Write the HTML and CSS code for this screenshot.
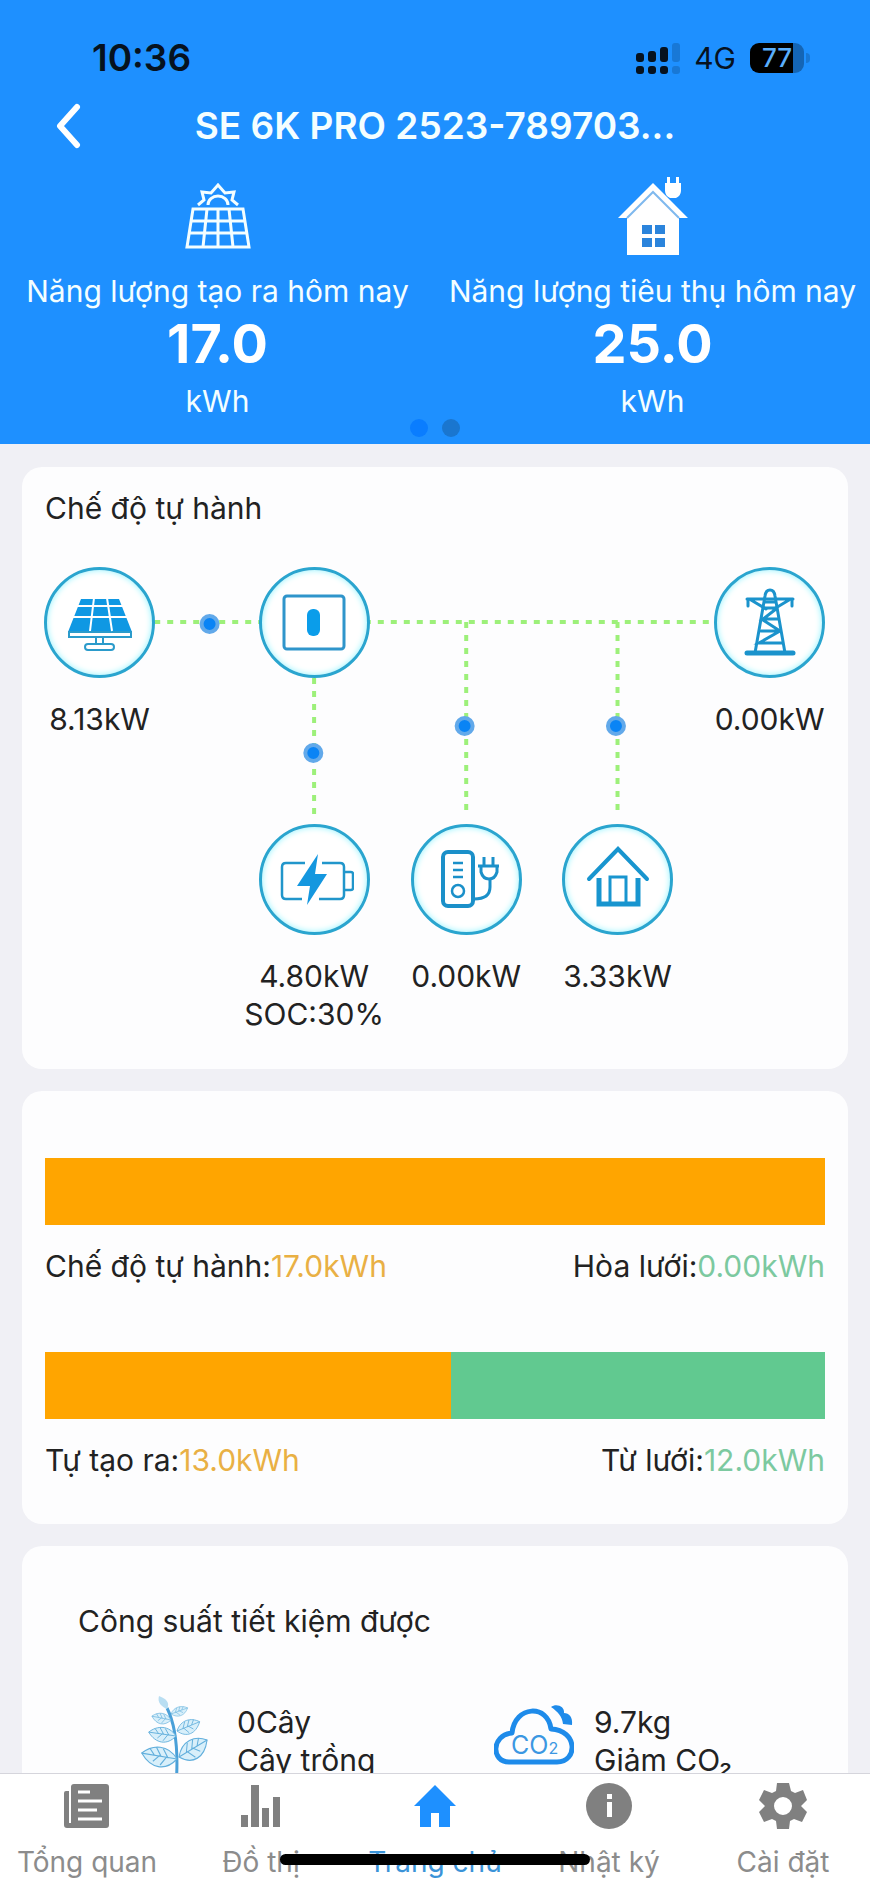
FILE: index.html
```html
<!DOCTYPE html>
<html lang="vi">
<head>
  <meta charset="UTF-8">
  <meta name="viewport" content="width=device-width, initial-scale=1.0">
  <title>SE 6K PRO</title>
  <link rel="stylesheet" href="styles.css">
</head>
<body>
  <header class="header">
    <div class="status">
      <span class="time">10:36</span>
      <svg class="signal" width="46" height="32" viewBox="0 0 46 32">
        <g fill="#06121f">
          <rect x="0" y="11" width="8" height="9" rx="3"/>
          <rect x="12" y="9" width="8" height="11" rx="3"/>
          <rect x="24" y="5" width="8" height="15" rx="3"/>
          <rect x="0" y="24" width="8" height="8" rx="3"/>
          <rect x="12" y="24" width="8" height="8" rx="3"/>
          <rect x="24" y="24" width="8" height="8" rx="3"/>
        </g>
        <g fill="#1878d6">
          <rect x="36" y="1" width="8" height="19" rx="3"/>
          <rect x="36" y="24" width="8" height="8" rx="3"/>
        </g>
      </svg>
      <span class="network">4G</span>
      <span class="battery">77</span>
    </div>
    <div class="navbar">
      <button class="back" aria-label="Quay lại">
        <svg width="28" height="46" viewBox="0 0 28 46"><path d="M23 4 6 23l17 19" fill="none" stroke="#fff" stroke-width="6" stroke-linecap="round" stroke-linejoin="round"/></svg>
      </button>
      <h1>SE 6K PRO 2523-789703...</h1>
    </div>
    <div class="summary">
      <div class="stat">
        <svg width="80" height="80" viewBox="0 0 80 80" fill="none" stroke="#f4feff" stroke-width="3">
          <path d="M15 33h50l6 38H9zM12 45h56M11 57h58M29 33l-4 38M40 33v38M51 33l4 38"/>
          <path d="M20 29l6-5-2-8 9 1 7-8 7 8 9-1-2 8 6 5"/>
          <path d="M30 29a10 9 0 0 1 20 0"/>
        </svg>
        <p class="stat-label">Năng lượng tạo ra hôm nay</p>
        <p class="stat-value">17.0</p>
        <p class="stat-unit">kWh</p>
      </div>
      <div class="stat">
        <svg width="80" height="80" viewBox="0 0 80 80">
          <path d="M40 12 66 38v41H14V38z" fill="#fff"/>
          <path d="M40 7 5 42h9l26-26 26 26h9L61 28z" fill="#fff"/>
          <path d="M14 42l26-26 26 26" fill="none" stroke="#7fb9ee" stroke-width="2"/>
          <path d="M52 7h16v8a8 8 0 0 1-5 7h-6a8 8 0 0 1-5-7zM54 1h3v7h-3zM63 1h3v7h-3z" fill="#fff"/>
          <path d="M29 49h10v9H29zM42 49h10v9H42zM29 62h10v9H29zM42 62h10v9H42z" fill="#2b84dc"/>
        </svg>
        <p class="stat-label">Năng lượng tiêu thụ hôm nay</p>
        <p class="stat-value">25.0</p>
        <p class="stat-unit">kWh</p>
      </div>
    </div>
    <div class="pager">
      <span class="pager-dot active"></span>
      <span class="pager-dot"></span>
    </div>
  </header>

  <main class="content">
    <section class="card flow-card">
      <h2>Chế độ tự hành</h2>
      <div class="flow">
        <svg class="flow-lines" width="100%" height="257">
          <g stroke="#9df07a" stroke-width="4" stroke-dasharray="6 7">
            <line x1="14%" y1="55" x2="28%" y2="55"/>
            <line x1="41%" y1="55" x2="86%" y2="55"/>
            <line x1="34.5%" y1="111" x2="34.5%" y2="250"/>
            <line x1="54%" y1="55" x2="54%" y2="250"/>
            <line x1="73.4%" y1="55" x2="73.4%" y2="250"/>
          </g>
          <g fill="#0a84f5" stroke="#62a9ea" stroke-width="4">
            <circle cx="21.1%" cy="57" r="8"/>
            <circle cx="34.4%" cy="186" r="8"/>
            <circle cx="53.8%" cy="159" r="8"/>
            <circle cx="73.2%" cy="159" r="8"/>
          </g>
        </svg>

        <div class="node node-pv">
          <div class="circle">
            <svg width="80" height="80" viewBox="0 0 80 80">
              <path d="M21 16h38l13 33H8z" fill="#0f98e3"/>
              <path d="M9 49h62v5H9zM36 55v6M43 55v6" fill="#fff" stroke="#2b9bcb" stroke-width="2"/>
              <rect x="25" y="61" width="29" height="6" rx="3" fill="#fff" stroke="#2b9bcb" stroke-width="2"/>
              <path d="M17 23h48M13 34h56M34 15l-4 33M47 15l5 33" stroke="#fff" stroke-width="2" fill="none"/>
            </svg>
          </div>
          <span>8.13kW</span>
        </div>
        <div class="node node-inverter">
          <div class="circle">
            <svg width="80" height="80" viewBox="0 0 80 80">
              <rect x="10" y="13" width="60" height="53" rx="3" fill="none" stroke="#2f95cb" stroke-width="3"/>
              <rect x="33" y="26" width="13" height="27" rx="6" fill="#0a9dea"/>
            </svg>
          </div>
        </div>
        <div class="node node-grid">
          <div class="circle">
            <svg width="80" height="80" viewBox="0 0 80 80" fill="none" stroke="#1b93cc" stroke-width="3" stroke-linecap="round">
              <path d="M25 70l10-57c1-8 9-8 10 0l10 57"/>
              <path d="M17 16h46M18 16v7M62 16v7M21 17l15 9M59 17l-15 9" />
              <path d="M35 19h10M34 25h12M46 26 33 36h15M33 37l17 11M31 48h19M50 48 29 60h23" stroke-width="3"/>
              <path d="M17 70h46" stroke-width="5"/>
            </svg>
          </div>
          <span>0.00kW</span>
        </div>
        <div class="node node-battery">
          <div class="circle">
            <svg width="80" height="80" viewBox="0 0 80 80">
              <path d="M31 23H12q-4 0-4 4v28q0 4 4 4h16M48 23h18q4 0 4 4v28q0 4-4 4H45M70 32h7q2 0 2 2v14q0 2-2 2h-7" fill="none" stroke="#2196cb" stroke-width="2.5"/>
              <path d="M44 14 23 46h13l-3 19 20-31H41z" fill="#1497df"/>
            </svg>
          </div>
          <span>4.80kW</span>
          <span>SOC:30%</span>
        </div>
        <div class="node node-charger">
          <div class="circle">
            <svg width="80" height="80" viewBox="0 0 80 80" fill="none" stroke="#1b90c9">
              <rect x="17" y="12" width="30" height="54" rx="5" stroke-width="4"/>
              <path d="M27 23h10M27 30h10M27 37h10" stroke-width="2.5"/>
              <circle cx="32" cy="51" r="6" stroke-width="2.5"/>
              <path d="M48 59c11 0 16-4 16-12v-9" stroke-width="3"/>
              <path d="M52 26h21M58 17v8M67 17v8M55 27v5q2 7 8 7t8-7v-5" stroke-width="3"/>
            </svg>
          </div>
          <span>0.00kW</span>
        </div>
        <div class="node node-home">
          <div class="circle">
            <svg width="80" height="80" viewBox="0 0 80 80" fill="none" stroke="#1895cf">
              <path d="M11 39 40 9l29 30" stroke-width="4" stroke-linecap="round"/>
              <path d="M21 38v26h39V38" stroke-width="5"/>
              <path d="M32 63V37h16v26" stroke-width="3"/>
            </svg>
          </div>
          <span>3.33kW</span>
        </div>
      </div>
    </section>

    <section class="card energy-card">
      <div class="energy">
        <div class="bar"><div class="bar-own" style="width: 100%"></div></div>
        <div class="energy-row">
          <p>Chế độ tự hành:<span class="own">17.0kWh</span></p>
          <p>Hòa lưới:<span class="grid">0.00kWh</span></p>
        </div>
      </div>
      <div class="energy">
        <div class="bar"><div class="bar-own" style="width: 52%"></div></div>
        <div class="energy-row">
          <p>Tự tạo ra:<span class="own">13.0kWh</span></p>
          <p>Từ lưới:<span class="grid">12.0kWh</span></p>
        </div>
      </div>
    </section>

    <section class="card saving-card">
      <h2>Công suất tiết kiệm được</h2>
      <div class="savings">
        <div class="saving">
          <svg width="80" height="92" viewBox="0 0 80 92">
            <defs>
              <g id="leaf">
                <path d="M0 0C6-13 20-15 31-9 25 5 12 9 0 0z" fill="#d8effa" stroke="#62afdc"/>
                <path d="M0 0 31-9M8-2l3-8M14-4l3-8M20-6l3-6M9-3l7 6M15-5l7 4" fill="none" stroke="#62afdc"/>
              </g>
            </defs>
            <path d="M30 14q13 26 9 78" fill="none" stroke="#4aa0d8" stroke-width="3"/>
            <path d="M30 15C21 11 21 6 22 2c8 3 11 7 8 13z" fill="#b9def2"/>
            <use href="#leaf" transform="translate(34 20) rotate(-4) scale(.55)"/>
            <use href="#leaf" transform="translate(34 26) rotate(-6) scale(-.6 .65)"/>
            <use href="#leaf" transform="translate(40 37) rotate(-4) scale(.75 .85)"/>
            <use href="#leaf" transform="translate(39 42) rotate(-9) scale(-.85 .9)"/>
            <use href="#leaf" transform="translate(42 63) rotate(-12) scale(1 1.2)"/>
            <use href="#leaf" transform="translate(40 65) rotate(-8) scale(-1.1 1.2)"/>
          </svg>
          <p>0Cây<br>Cây trồng</p>
        </div>
        <div class="saving">
          <svg width="80" height="92" viewBox="0 0 80 92">
            <path d="M15 68C-3 68-3 41 18 39 21 11 54 10 57 35c27 1 27 33 6 33z" fill="none" stroke="#1e8bea" stroke-width="5" stroke-linejoin="round"/>
            <path d="M57 13c5-4 14-1 13 6 5 0 9 4 8 12l-9-1c-1-8-5-12-12-17z" fill="#1e8bea"/>
            <text class="co2" x="17" y="60">CO<tspan class="co2-sub">2</tspan></text>
          </svg>
          <p>9.7kg<br>Giảm CO₂</p>
        </div>
      </div>
    </section>
  </main>

  <nav class="tabbar">
    <a class="tab" href="#">
      <svg width="48" height="48" viewBox="0 0 48 48" fill="#808080">
        <path d="M13 2h30q3 0 3 3v38q0 3-3 3H4q-3 0-3-3V11q0-2 2-2h3v32h2V5q0-3 3-3z"/>
        <path d="M15 10h12M15 19h24M15 28h19M15 37h24" stroke="#fff" stroke-width="3"/>
      </svg>
      <span>Tổng quan</span>
    </a>
    <a class="tab" href="#">
      <svg width="48" height="48" viewBox="0 0 48 48" fill="#808080"><path d="M4 33h7v12H4zM14 3h8v42h-8zM25 26h7v19h-7zM36 15h7v30h-7z"/></svg>
      <span>Đồ thị</span>
    </a>
    <a class="tab active" href="#">
      <svg width="48" height="48" viewBox="0 0 48 48" fill="#1e90ff"><path d="M24 3 3 24h6v21h11V31h8v14h11V24h6z"/></svg>
      <span>Trang chủ</span>
    </a>
    <a class="tab" href="#">
      <svg width="48" height="48" viewBox="0 0 48 48" fill="#808080"><circle cx="24" cy="24" r="23"/><path d="M22 20h5v15h-5zM22 12h5v5h-5z" fill="#fff"/></svg>
      <span>Nhật ký</span>
    </a>
    <a class="tab" href="#">
      <svg width="48" height="48" viewBox="0 0 48 48" fill="#808080"><path fill-rule="evenodd" d="M18 1h12l2 8 4 2 8-3 4 10-6 6 6 6-5 10-8-3-4 2-1 8H18l-1-8-4-2-8 3L0 30l6-6-6-6L5 8l8 3 4-2zM24 15a9 9 0 1 0 0 18 9 9 0 0 0 0-18z"/></svg>
      <span>Cài đặt</span>
    </a>
    <div class="home-indicator"></div>
  </nav>
</body>
</html>
```
FILE: styles.css
```css
* {
  padding: 0;
  margin: 0;
  box-sizing: border-box;
}
body {
  display: flex;
  flex-direction: column;
  height: 100vh;
  overflow: hidden;
  background-color: #f0f0f5;
  color: #222;
  font-family: Inter, "Noto Sans", sans-serif;
  font-size: 30px;
  line-height: 38px;
}
svg {
  display: block;
  flex-shrink: 0;
}
h1, h2 {
  font-size: 30px;
  font-weight: 400;
}

/* header */
.header {
  position: relative;
  flex-shrink: 0;
  background-color: #1e90ff;
  color: #f4feff;
}
.status {
  display: flex;
  align-items: center;
  height: 102px;
  padding: 14px 66px 0 92px;
  color: #06121f;
}
.time {
  margin-right: auto;
  font-size: 37px;
  font-weight: 600;
}
.network {
  margin: 0 14px 0 12px;
}
.battery {
  position: relative;
  width: 54px;
  height: 30px;
  border-radius: 9px;
  background: linear-gradient(to right, #000 80%, #1465b5 80%);
  color: #5aaefc;
  font-size: 26px;
  font-weight: 500;
  line-height: 30px;
  text-align: center;
}
.battery::after {
  content: "";
  position: absolute;
  right: -6px;
  top: 10px;
  width: 4px;
  height: 10px;
  border-radius: 0 4px 4px 0;
  background-color: #1878d6;
}
.navbar {
  display: grid;
  grid-template-columns: 96px 1fr 96px;
  align-items: center;
  height: 48px;
}
.back {
  justify-self: end;
  margin-right: 14px;
  border: none;
  background: none;
  cursor: pointer;
}
.navbar h1 {
  font-size: 37px;
  font-weight: 600;
  text-align: center;
}
.summary {
  display: grid;
  grid-template-columns: 1fr 1fr;
  padding: 26px 0 24px;
}
.stat {
  display: flex;
  flex-direction: column;
  align-items: center;
}
.stat-label {
  margin-top: 16px;
  white-space: nowrap;
}
.stat-value {
  color: #fff;
  font-size: 54px;
  font-weight: 700;
  line-height: 68px;
}
.stat-unit {
  margin-top: 4px;
}
.pager {
  position: absolute;
  left: 0;
  right: 0;
  bottom: 7px;
  display: flex;
  justify-content: center;
  gap: 14px;
}
.pager-dot {
  width: 18px;
  height: 18px;
  border-radius: 50%;
  background-color: #1a76cf;
}
.pager-dot.active {
  background-color: #0a7dff;
}

/* cards */
.content {
  display: flex;
  flex: 1;
  flex-direction: column;
  gap: 22px;
  min-height: 0;
  padding: 23px 22px 0;
  overflow: hidden;
}
.card {
  flex-shrink: 0;
  padding: 22px 23px;
  border-radius: 20px;
  background-color: #fdfdfe;
}
.flow-card h2 {
  margin-bottom: 40px;
}

/* energy flow diagram */
.flow {
  position: relative;
  height: 480px;
}
.flow-lines {
  position: absolute;
  left: 0;
  top: 0;
}
.node {
  position: absolute;
  display: flex;
  flex-direction: column;
  align-items: center;
  width: 150px;
  margin-left: -75px;
}
.circle {
  display: flex;
  align-items: center;
  justify-content: center;
  width: 111px;
  height: 111px;
  margin-bottom: 22px;
  border: 3px solid #2aa5cf;
  border-radius: 50%;
  background-color: #fff;
  box-shadow: inset 0 0 6px #8ff4ff;
}
.node-pv {
  left: 7%;
}
.node-inverter {
  left: 34.5%;
}
.node-grid {
  left: 92.9%;
}
.node-battery {
  left: 34.5%;
  top: 257px;
}
.node-charger {
  left: 54%;
  top: 257px;
}
.node-home {
  left: 73.4%;
  top: 257px;
}

/* energy bars */
.energy-card {
  display: flex;
  flex-direction: column;
  gap: 67px;
  padding: 67px 23px 45px;
}
.bar {
  height: 67px;
  margin-bottom: 22px;
  background-color: #61c990;
}
.bar-own {
  height: 100%;
  background-color: #ffa500;
}
.energy-row {
  display: flex;
  justify-content: space-between;
}
.own {
  color: #e9b044;
}
.grid {
  color: #7cc9a0;
}

/* savings */
.saving-card {
  padding: 56px;
}
.savings {
  display: grid;
  grid-template-columns: 1fr 1fr;
  margin-top: 54px;
}
.saving {
  display: flex;
  gap: 20px;
  padding-left: 59px;
}
.saving p {
  padding-top: 9px;
}
.co2 {
  fill: #3b97e2;
  font-size: 25px;
}
.co2-sub {
  font-size: 16px;
}

/* tab bar */
.tabbar {
  position: relative;
  display: grid;
  grid-template-columns: repeat(5, 1fr);
  flex-shrink: 0;
  height: 110px;
  padding-top: 8px;
  border-top: 1px solid #d5d5dc;
  background-color: #fff;
}
.tab {
  display: flex;
  flex-direction: column;
  align-items: center;
  gap: 13px;
  color: #8c8c8c;
  font-size: 28px;
  text-decoration: none;
  white-space: nowrap;
}
.tab.active {
  color: #3a93d8;
}
.home-indicator {
  position: absolute;
  left: 50%;
  bottom: 18px;
  width: 310px;
  height: 11px;
  margin-left: -155px;
  border-radius: 6px;
  background-color: #000;
}
```
